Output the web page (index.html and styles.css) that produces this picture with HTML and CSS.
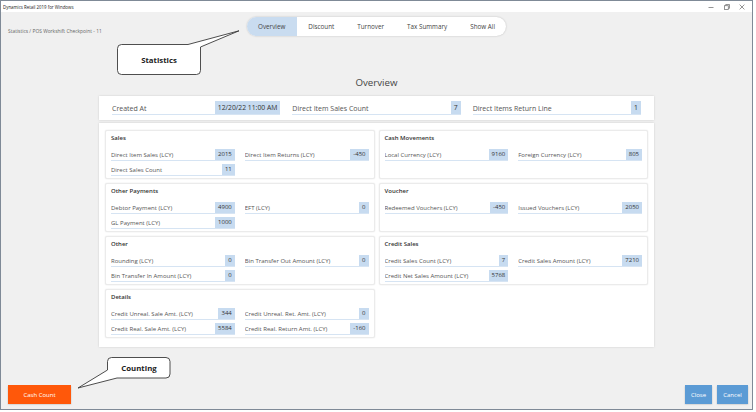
FILE: index.html
```html
<!DOCTYPE html>
<html lang="en">
<head>
<meta charset="utf-8">
<title>Statistics</title>
<link rel="stylesheet" href="styles.css">
</head>
<body>
<div class="window">
  <div class="titlebar">
    <span class="app-title">Dynamics Retail 2019 for Windows</span>
    <div class="win-controls">
      <span class="ctl"><svg width="6" height="6" viewBox="0 0 6 6"><path d="M0.5 3.5H5.5" stroke="#7a7a7a" stroke-width="0.8"/></svg></span>
      <span class="ctl"><svg width="6" height="6" viewBox="0 0 6 6"><rect x="0.5" y="1.7" width="3.8" height="3.8" fill="none" stroke="#7a7a7a" stroke-width="0.8"/><path d="M1.7 1.7V0.5H5.5V4.3H4.3" fill="none" stroke="#7a7a7a" stroke-width="0.8"/></svg></span>
      <span class="ctl"><svg width="6" height="6" viewBox="0 0 6 6"><path d="M0.6 0.6L5.4 5.4M5.4 0.6L0.6 5.4" stroke="#7a7a7a" stroke-width="0.8"/></svg></span>
    </div>
  </div>

  <div class="toprow">
    <div class="breadcrumb">Statistics / POS Workshift Checkpoint - 11</div>
    <nav class="tabs">
      <span class="tab active">Overview</span>
      <span class="tab">Discount</span>
      <span class="tab">Turnover</span>
      <span class="tab">Tax Summary</span>
      <span class="tab">Show All</span>
    </nav>
    <div></div>
  </div>

  <h1 class="heading">Overview</h1>

  <section class="header-card">
    <div class="hfield"><span class="hlabel">Created At</span><span class="hvalue">12/20/22 11:00 AM</span></div>
    <div class="hfield"><span class="hlabel">Direct Item Sales Count</span><span class="hvalue">7</span></div>
    <div class="hfield"><span class="hlabel">Direct Items Return Line</span><span class="hvalue">1</span></div>
  </section>

  <section class="panel">
    <div class="card">
      <div class="card-title">Sales</div>
      <div class="fields">
        <div class="field"><span class="label">Direct Item Sales (LCY)</span><span class="value">2015</span></div>
        <div class="field"><span class="label">Direct Item Returns (LCY)</span><span class="value">-450</span></div>
        <div class="field"><span class="label">Direct Sales Count</span><span class="value">11</span></div>
      </div>
    </div>
    <div class="card">
      <div class="card-title">Cash Movements</div>
      <div class="fields">
        <div class="field"><span class="label">Local Currency (LCY)</span><span class="value">9160</span></div>
        <div class="field"><span class="label">Foreign Currency (LCY)</span><span class="value">805</span></div>
      </div>
    </div>
    <div class="card">
      <div class="card-title">Other Payments</div>
      <div class="fields">
        <div class="field"><span class="label">Debtor Payment (LCY)</span><span class="value">4900</span></div>
        <div class="field"><span class="label">EFT (LCY)</span><span class="value">0</span></div>
        <div class="field"><span class="label">GL Payment (LCY)</span><span class="value">1000</span></div>
      </div>
    </div>
    <div class="card">
      <div class="card-title">Voucher</div>
      <div class="fields">
        <div class="field"><span class="label">Redeemed Vouchers (LCY)</span><span class="value">-450</span></div>
        <div class="field"><span class="label">Issued Vouchers (LCY)</span><span class="value">2050</span></div>
      </div>
    </div>
    <div class="card">
      <div class="card-title">Other</div>
      <div class="fields">
        <div class="field"><span class="label">Rounding (LCY)</span><span class="value">0</span></div>
        <div class="field"><span class="label">Bin Transfer Out Amount (LCY)</span><span class="value">0</span></div>
        <div class="field"><span class="label">Bin Transfer In Amount (LCY)</span><span class="value">0</span></div>
      </div>
    </div>
    <div class="card">
      <div class="card-title">Credit Sales</div>
      <div class="fields">
        <div class="field"><span class="label">Credit Sales Count (LCY)</span><span class="value">7</span></div>
        <div class="field"><span class="label">Credit Sales Amount (LCY)</span><span class="value">7210</span></div>
        <div class="field"><span class="label">Credit Net Sales Amount (LCY)</span><span class="value">5768</span></div>
      </div>
    </div>
    <div class="card">
      <div class="card-title">Details</div>
      <div class="fields">
        <div class="field"><span class="label">Credit Unreal. Sale Amt. (LCY)</span><span class="value">344</span></div>
        <div class="field"><span class="label">Credit Unreal. Ret. Amt. (LCY)</span><span class="value">0</span></div>
        <div class="field"><span class="label">Credit Real. Sale Amt. (LCY)</span><span class="value">5584</span></div>
        <div class="field"><span class="label">Credit Real. Return Amt. (LCY)</span><span class="value">-160</span></div>
      </div>
    </div>
  </section>

  <footer class="footer">
    <button class="btn btn-orange">Cash Count</button>
    <div class="right-btns">
      <button class="btn btn-blue btn-close">Close</button>
      <button class="btn btn-blue btn-cancel">Cancel</button>
    </div>
  </footer>

  <div class="callout callout-stats">
    <svg class="callout-shape" width="123" height="46" viewBox="0 0 123 46">
      <path d="M4.5 14.5 L71 14.5 L122 0.8 L83.5 17 L83.5 40.5 Q83.5 44.5 79.5 44.5 L4.5 44.5 Q0.5 44.5 0.5 40.5 L0.5 18.5 Q0.5 14.5 4.5 14.5 Z" fill="#fff" stroke="#3a3a3a" stroke-width="0.9"/>
    </svg>
    <span class="callout-text stats-text">Statistics</span>
  </div>

  <div class="callout callout-count">
    <svg class="callout-shape" width="95" height="34" viewBox="0 0 95 34">
      <path d="M34.5 1.5 L89 1.5 Q93 1.5 93 5.5 L93 18 Q93 22 89 22 L40 22 L1 32 L30.5 14 L30.5 5.5 Q30.5 1.5 34.5 1.5 Z" fill="#fff" stroke="#3a3a3a" stroke-width="0.9"/>
    </svg>
    <span class="callout-text count-text">Counting</span>
  </div>
</div>
</body>
</html>
```

FILE: styles.css
```css
* { box-sizing: border-box; }

html, body {
  margin: 0;
  padding: 0;
  background: #ffffff;
}

body {
  font-family: "Open Sans", "Noto Sans", sans-serif;
  color: #444;
}

.window {
  position: relative;
  width: 753px;
  height: 410px;
  border: 1px solid #7f8a97;
  background: #f0f0f0;
  display: flex;
  flex-direction: column;
}

/* title bar */
.titlebar {
  height: 11px;
  background: #ffffff;
  display: flex;
  align-items: center;
  justify-content: space-between;
  padding-left: 2px;
}

.app-title {
  font-size: 4.4px;
  line-height: 6px;
  color: #222;
}

.win-controls {
  display: flex;
  align-items: center;
  padding-right: 2px;
}

.ctl {
  width: 15.5px;
  height: 11px;
  display: flex;
  align-items: center;
  justify-content: center;
}

.ctl svg { display: block; }

/* top row */
.toprow {
  display: grid;
  grid-template-columns: 1fr auto 1fr;
  padding-top: 5px;
}

.breadcrumb {
  font-size: 4.9px;
  line-height: 6px;
  color: #666;
  padding-left: 7px;
  margin-top: 11px;
  white-space: nowrap;
}

.tabs {
  display: flex;
  height: 19px;
  background: #ffffff;
  border-radius: 10px;
  overflow: hidden;
  box-shadow: 0 0 2px rgba(0, 0, 0, 0.22);
}

.tab {
  padding: 0 11.5px;
  line-height: 19px;
  font-size: 6.3px;
  color: #444;
  white-space: nowrap;
}

.tab.active {
  background: #c9dcf0;
}

/* heading */
.heading {
  margin: 40px 0 6px;
  text-align: center;
  font-size: 9.7px;
  line-height: 14px;
  font-weight: 400;
  color: #454545;
}

/* header card */
.header-card {
  align-self: center;
  width: 555px;
  background: #ffffff;
  padding: 5px 13px;
  display: grid;
  grid-template-columns: 1fr 1fr 1fr;
  column-gap: 12px;
  box-shadow: 0 0 2px rgba(0, 0, 0, 0.15);
}

.hfield {
  display: flex;
  align-items: flex-end;
  height: 14px;
  border-bottom: 1px solid #d6e4f3;
}

.hlabel {
  flex: 1;
  font-size: 7px;
  line-height: 10px;
  color: #555;
  white-space: nowrap;
}

.hvalue {
  background: #c7dbf0;
  font-size: 6.8px;
  line-height: 13px;
  padding: 0 3px;
  color: #333;
  white-space: nowrap;
}

/* panel */
.panel {
  align-self: center;
  width: 555px;
  margin-top: 3px;
  background: #ffffff;
  padding: 7px 6px 9px;
  display: grid;
  grid-template-columns: 1fr 1fr;
  gap: 4px;
  box-shadow: 0 0 2px rgba(0, 0, 0, 0.15);
}

.card {
  background: #ffffff;
  border: 1px solid #ebebeb;
  border-radius: 2px;
  box-shadow: 0 0 1.5px rgba(0, 0, 0, 0.12);
  padding: 2px 5px 2px;
}

.card-title {
  font-size: 6px;
  line-height: 10px;
  font-weight: 600;
  color: #333;
  margin-bottom: 6px;
}

.fields {
  display: grid;
  grid-template-columns: 1fr 1fr;
  column-gap: 10px;
  row-gap: 3px;
}

.field {
  display: flex;
  align-items: flex-end;
  height: 12px;
  border-bottom: 1px solid #d6e4f3;
  min-width: 0;
}

.label {
  flex: 1;
  min-width: 0;
  font-size: 6px;
  line-height: 9px;
  color: #555555;
  white-space: nowrap;
  overflow: hidden;
}

.value {
  background: #c7dbf0;
  font-size: 6px;
  line-height: 11px;
  padding: 0 3px;
  color: #333;
  white-space: nowrap;
}

/* footer */
.footer {
  margin-top: auto;
  display: flex;
  justify-content: space-between;
  align-items: flex-end;
  padding: 0 4px 5px 7px;
}

.right-btns {
  display: flex;
  gap: 5px;
}

.btn {
  font-family: inherit;
  font-size: 6px;
  color: #ffffff;
  height: 19px;
  border: none;
  padding: 0;
  margin: 0;
  box-shadow: 0 0.5px 1.5px rgba(0, 0, 0, 0.25);
}

.btn-orange {
  width: 63px;
  background: #ff580a;
}

.btn-blue {
  background: #5b9bd5;
}

.btn-close { width: 27px; }
.btn-cancel { width: 31px; }

/* callouts (annotations overlaying the UI) */
.callout {
  position: absolute;
}

.callout-shape {
  position: absolute;
  left: 0;
  top: 0;
  display: block;
}

.callout-text {
  position: absolute;
  display: flex;
  align-items: center;
  justify-content: center;
  font-size: 7.8px;
  font-weight: 700;
  color: #222;
}

.callout-stats {
  left: 116px;
  top: 29px;
  width: 123px;
  height: 46px;
}

.stats-text {
  left: 0;
  top: 15px;
  width: 84px;
  height: 30px;
}

.callout-count {
  left: 76px;
  top: 355px;
  width: 95px;
  height: 34px;
}

.count-text {
  left: 31px;
  top: 2px;
  width: 62px;
  height: 20px;
}
```
